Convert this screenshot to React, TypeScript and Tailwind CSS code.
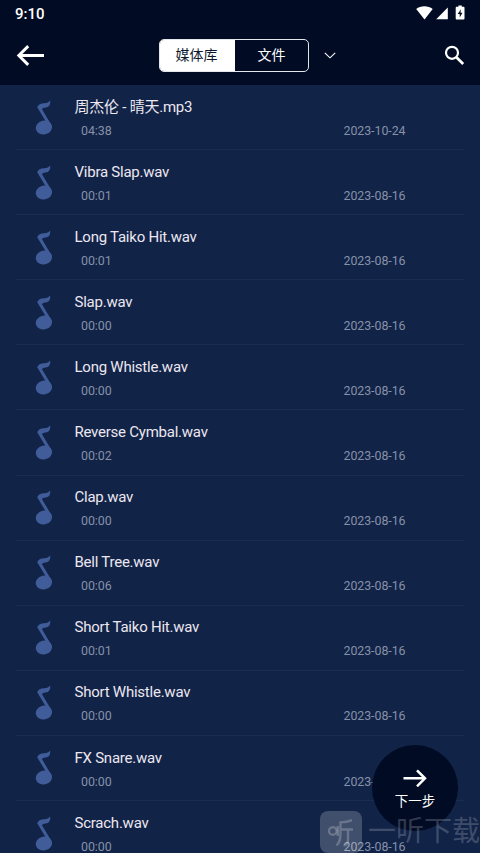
type Track = { name: string; duration: string; date: string };

const tracks: Track[] = [
  { name: "周杰伦 - 晴天.mp3", duration: "04:38", date: "2023-10-24" },
  { name: "Vibra Slap.wav", duration: "00:01", date: "2023-08-16" },
  { name: "Long Taiko Hit.wav", duration: "00:01", date: "2023-08-16" },
  { name: "Slap.wav", duration: "00:00", date: "2023-08-16" },
  { name: "Long Whistle.wav", duration: "00:00", date: "2023-08-16" },
  { name: "Reverse Cymbal.wav", duration: "00:02", date: "2023-08-16" },
  { name: "Clap.wav", duration: "00:00", date: "2023-08-16" },
  { name: "Bell Tree.wav", duration: "00:06", date: "2023-08-16" },
  { name: "Short Taiko Hit.wav", duration: "00:01", date: "2023-08-16" },
  { name: "Short Whistle.wav", duration: "00:00", date: "2023-08-16" },
  { name: "FX Snare.wav", duration: "00:00", date: "2023-08-16" },
  { name: "Scrach.wav", duration: "00:00", date: "2023-08-16" },
];

const NoteIcon = () => (
  <svg className="w-[18px] h-[36px] shrink-0" viewBox="0 0 18 36" fill="#405c99">
    <ellipse cx="8.9" cy="27.6" rx="8.2" ry="6.9" transform="rotate(-12 8.9 27.6)" />
    <path d="M15.2 .5C15.6 5 14 7.2 10.6 7.6C8.6 7.9 7.6 8.2 7 9.2L16.6 25.2L16.6 28L13.2 25.6L2.2 7.3C3.2 4.6 5.6 3.6 9.2 3.3C12 3 13.8 2.2 15.2 .5Z" />
  </svg>
);

function StatusBar() {
  return (
    <div className="flex items-center justify-between h-[26px] pl-[15px] pr-[15px]">
      <span className="text-[15px] leading-none font-medium mt-[2px]">9:10</span>
      <svg className="w-[50px] h-[16px]" viewBox="0 0 50 16" fill="#fff">
        <path d="M1.2 4C5.5 .4 13.2 .4 17.7 4L9.5 14.4Z" />
        <path d="M32.8 2.6V14.2H21.2Z" />
        <path d="M43.4 .4h3.4v1.4h1.8q.9 0 .9.9v10.8q0 .9-.9.9h-7q-.9 0-.9-.9V2.7q0-.9.9-.9h1.8Z" />
        <path d="M45.9 4.2L42.7 9h2v3.4L47.5 7.8h-2Z" fill="#010c24" />
      </svg>
    </div>
  );
}

function Toolbar() {
  return (
    <div className="flex items-center h-[59px] pl-[16px] pr-[15px]">
      <svg className="w-[28px] h-[22px]" viewBox="0 0 28 22" fill="none" stroke="#fff" strokeWidth="2.9">
        <path d="M28 10.5H2.8M12.2 1.1L2.8 10.5L12.2 19.9" />
      </svg>
      <div className="flex ml-[115px] w-[150px] h-[33px] rounded-[5px] border border-[#e4e6eb] overflow-hidden text-[14px]">
        <div className="w-[75px] flex items-center justify-center pr-[2px] bg-white text-[#10182e]">媒体库</div>
        <div className="flex-1 flex items-center justify-center">文件</div>
      </div>
      <svg className="w-[12px] h-[7px] ml-[15px]" viewBox="0 0 12 7" fill="none" stroke="#fff" strokeWidth="1.1">
        <path d="M.8 .8L6 5.8L11.2 .8" />
      </svg>
      <svg className="w-[21px] h-[21px] ml-auto" viewBox="0 0 21 21" fill="none" stroke="#fff">
        <circle cx="8" cy="7.8" r="6" strokeWidth="2.2" />
        <path d="M12.4 12.2L19.2 19" strokeWidth="2.7" />
      </svg>
    </div>
  );
}

function TrackRow({ track }: { track: Track }) {
  return (
    <div className="flex h-[65.1px] mx-[16px] border-b border-[#1a2d50] pl-[19px]">
      <div className="pt-[14.5px]">
        <NoteIcon />
      </div>
      <div className="ml-[21.5px] flex-1 pt-[10.6px]">
        <div className="h-[22px] leading-[22px] text-[15px] tracking-[-0.24px] text-[#ece7f0] whitespace-nowrap">{track.name}</div>
        <div className="flex h-[18px] mt-[4px] leading-[18px] text-[12.4px] tracking-[-0.06px] text-[#8691a8]">
          <span className="ml-[6.5px] w-[262.5px]">{track.duration}</span>
          <span>{track.date}</span>
        </div>
      </div>
    </div>
  );
}

function Watermark() {
  return (
    <div className="absolute left-[320px] bottom-0 flex items-center h-[42px]">
      <svg className="w-[42px] h-[42px] shrink-0" viewBox="0 0 42 42" fill="none">
        <rect width="42" height="42" rx="8" fill="#fff" fillOpacity=".2" />
        <g stroke="#fff" strokeOpacity=".22" strokeWidth="2.4">
          <circle cx="12.8" cy="20" r="3.8" />
          <path d="M17.8 15V25M32 9.2C28 11 24 11.4 20.5 11.4V22C20.5 28 20 31 16.5 34.5M21.7 18.5H33M28 19.7V29Q28 34 23.5 34.5" />
        </g>
      </svg>
      <span className="ml-[6px] text-[28px] leading-none whitespace-nowrap text-white/20">一听下载</span>
    </div>
  );
}

export default function App() {
  return (
    <div className="relative flex flex-col w-[480px] h-[853px] overflow-hidden bg-[#112347] text-white font-['Roboto','Noto_Sans_CJK_SC',sans-serif]">
      <header className="h-[85px] shrink-0 bg-[#010c24]">
        <StatusBar />
        <Toolbar />
      </header>

      <main className="flex-1 overflow-hidden">
        {tracks.map(t => (
          <TrackRow key={t.name} track={t} />
        ))}
      </main>

      {/* Next step button */}
      <button className="absolute left-[372px] top-[745px] w-[86px] h-[86px] rounded-full bg-[#010c24] flex flex-col items-center pt-[24px]">
        <svg className="w-[24px] h-[18px]" viewBox="0 0 24 18" fill="none" stroke="#fff" strokeWidth="2.5">
          <path d="M.5 9.3H22M14 1.3L22 9.3L14 17.3" />
        </svg>
        <span className="mt-[4px] text-[13.5px] leading-[20px]">下一步</span>
      </button>

      <Watermark />
    </div>
  );
}
